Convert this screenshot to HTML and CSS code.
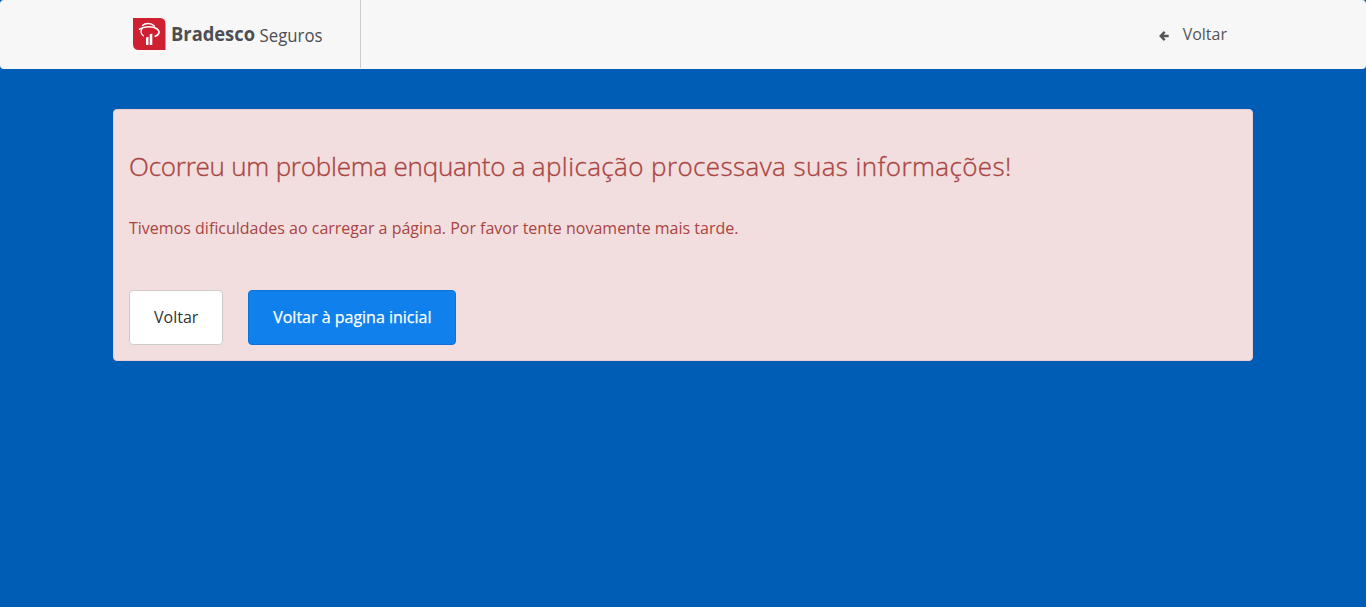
FILE: index.html
```html
<!DOCTYPE html>
<html lang="pt-BR">
<head>
<meta charset="utf-8">
<title>Bradesco Seguros</title>
<link rel="stylesheet" href="styles.css">
</head>
<body>
<header class="navbar">
  <div class="container navbar-inner">
    <a class="brand">
      <svg class="brand-logo" width="210" height="44" viewBox="0 0 210 44" role="img" aria-label="Bradesco Seguros">
        <path fill="#cf2031" d="M0 1h27q5.5 0 5.5 6v26H6q-6 0-6-6z"/>
        <g fill="none" stroke="#fff" stroke-linecap="round">
          <path stroke-width="1.3" d="M9.5 8.5C12 5.9 18 5.6 21.5 9"/>
          <path stroke-width="1.6" d="M6.5 12.2C11 9 20 8.8 24.2 12c3.4 2.8 1.8 5.8-2 7.3"/>
          <path stroke-width="1.3" d="M9.5 10.8c-2.4 3-1.8 6 .8 8"/>
        </g>
        <path fill="#fff" d="M13 20.5l2.5-.8V28H13zM16.7 17.2l2.6-.8V28h-2.6z"/>
        <text class="brand-bold" x="38" y="24" textLength="84" lengthAdjust="spacingAndGlyphs">Bradesco</text>
        <text class="brand-light" x="126.5" y="24.5" textLength="63" lengthAdjust="spacingAndGlyphs">Seguros</text>
      </svg>
    </a>
    <a class="back">
      <svg width="10" height="10" viewBox="0 0 10 10" fill="none" stroke="#555" stroke-width="2.4"><path d="M5.7 .8L1.7 5l4 4.2M2 5h7.7"/></svg>
      <span>Voltar</span>
    </a>
  </div>
</header>
<main class="container alert">
  <h2 class="alert-title"><span class="tight">Ocorreu um problema enquanto a </span><span class="wide">aplicação processava suas informações!</span></h2>
  <p class="alert-text">Tivemos dificuldades ao carregar a página. Por favor tente novamente mais tarde.</p>
  <div class="actions">
    <button class="btn">Voltar</button>
    <button class="btn btn-primary">Voltar à pagina inicial</button>
  </div>
</main>
</body>
</html>
```
FILE: styles.css
```css
* { box-sizing: border-box; }
body {
  margin: 0;
  background: #005db5;
  font: 16px/26px "Open Sans", sans-serif;
}
.container { width: 1140px; margin: 0 auto; }
.navbar { height: 69px; background: #f7f7f7; border-radius: 4px; }
.navbar-inner { display: flex; justify-content: space-between; height: 68px; }
.brand { display: flex; width: 248px; padding: 17px 0 0 20px; border-right: 1px solid #ccc; }
.brand-logo { display: block; flex: none; }
.brand-bold { font: 700 20px "Open Sans", sans-serif; fill: #4d4e53; }
.brand-light { font: 400 18.5px "Open Sans", sans-serif; fill: #4d4e53; }
.back { display: flex; align-items: center; gap: 14px; padding-right: 26px; color: #555; }
.back svg { margin-top: 4px; }
.alert {
  height: 252px;
  margin-top: 40px;
  padding: 38px 15px 15px;
  background: #f2dede;
  border: 1px solid #ebccd1;
  border-radius: 4px;
  color: #a94442;
}
.alert-title {
  margin: 0 0 31px;
  font: 300 26px/36px "Open Sans", sans-serif;
  white-space: nowrap;
  -webkit-text-stroke: 0.35px #a94442;
}
.tight { letter-spacing: -0.23px; }
.wide { letter-spacing: 0.4px; }
.alert-text { margin: 0 0 49px; }
.actions { display: flex; gap: 25px; }
.btn {
  height: 55px;
  padding: 0 24px 2px;
  font: 400 16px/26px "Open Sans", sans-serif;
  color: #333;
  background: #fff;
  border: 1px solid #ccc;
  border-radius: 4px;
}
.btn-primary {
  width: 208px;
  padding: 0 0 2px;
  color: #fff;
  background: #1080ed;
  border-color: #0e73d5;
  -webkit-text-stroke: 0.25px #fff;
}
```
